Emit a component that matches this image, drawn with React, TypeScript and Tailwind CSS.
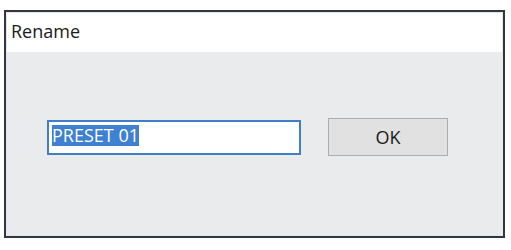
import React from "react";

export default function App() {
  return (
    <div
      className="w-[511px] h-[250px] bg-white pl-[4px] pt-[10px]"
      style={{ fontFamily: '"Open Sans", "Noto Sans", sans-serif' }}
    >
      <div className="w-[501px] h-[228px] border-2 border-[#33363f] flex flex-col bg-[#eaebec]">
        <div className="flex flex-col flex-1 border border-[#dfe8f0]">
          <div className="h-[39px] bg-white flex items-center pl-[4px] pb-[2px] text-[18px] text-[#1a1a1a]">
            Rename
          </div>
          <div className="flex-1 bg-[#eaebec] pl-[40px] pt-[66px]">
            <div className="flex items-center gap-[27px] h-[38px]">
              <div className="w-[254px] h-[35px] border-2 border-[#3f7fc6] bg-white flex items-start pt-[3px] pl-[3px]">
                <span className="bg-[#3f80d0] text-white text-[18px] leading-[21px]">PRESET 01</span>
              </div>
              <div className="w-[120px] h-[38px] border border-[#adadad] bg-[#e1e1e1] flex items-center justify-center text-[18px] text-[#1a1a1a]">
                OK
              </div>
            </div>
          </div>
        </div>
      </div>
    </div>
  );
}
